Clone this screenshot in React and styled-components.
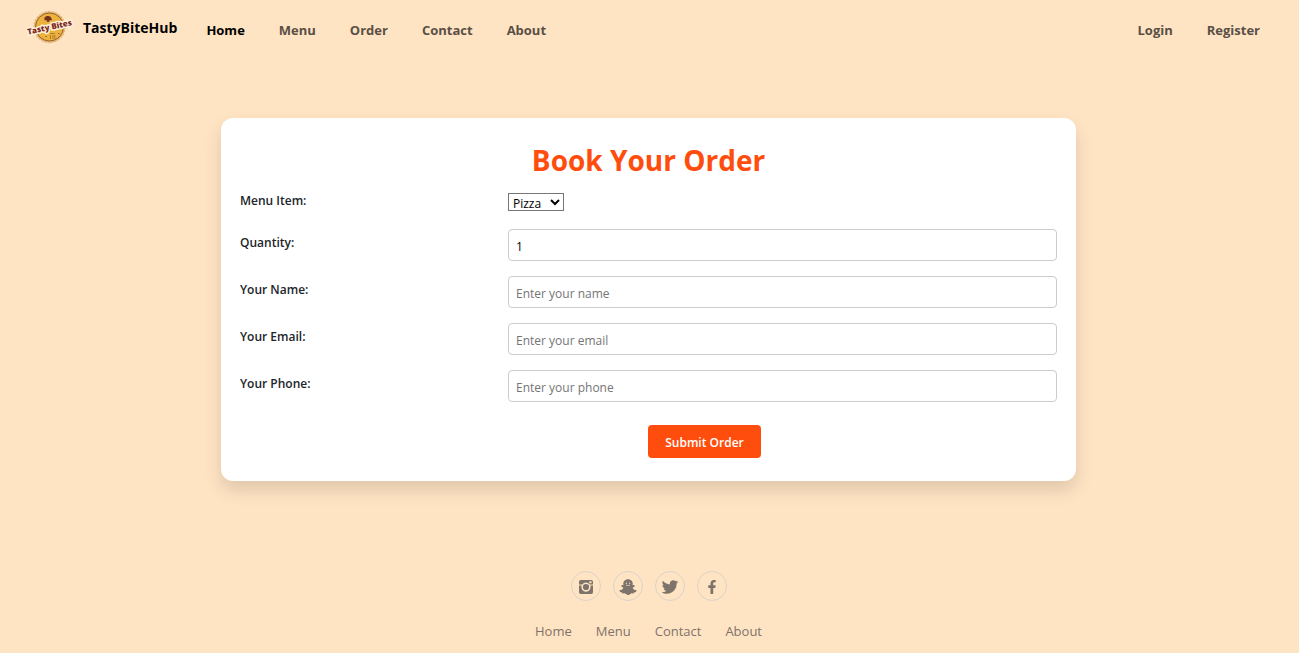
import React from "react";
import styled, { createGlobalStyle } from "styled-components";
import { IoLogoSnapchat, IoLogoTwitter } from "react-icons/io";
import { FaFacebookF } from "react-icons/fa";

const GlobalStyle = createGlobalStyle`
  *, *::before, *::after { box-sizing: border-box; }
  body {
    margin: 0;
    background: #ffe4c4;
    color: #212529;
    font-family: "Segoe UI", "Open Sans", "Noto Sans", sans-serif;
    font-size: 12px;
    line-height: 20px;
  }
`;

const Page = styled.div`
  padding-right: 2px;
`;

const Navbar = styled.nav`
  display: flex;
  align-items: center;
  height: 58px;
  padding: 0 20px 0 26px;
`;

const Brand = styled.a`
  display: flex;
  align-items: center;
  gap: 10px;
  margin-right: 12px;
  padding-bottom: 2px;
  color: #000;
  font-size: 14px;
  font-weight: 700;
  text-decoration: none;
`;

const Logo = styled.svg`
  display: block;
  width: 47px;
  height: 36px;
  margin-top: -2px;
`;

const NavList = styled.ul`
  display: flex;
  list-style: none;
  margin: 0;
  padding: 2px 0 0;
  margin-left: ${(p) => (p.$end ? "auto" : "0")};
`;

const NavLink = styled.a`
  display: block;
  padding: 0 17px;
  color: ${(p) => (p.$active ? "#000" : "#594f44")};
  font-size: 13px;
  font-weight: 700;
  text-decoration: none;
`;

const Main = styled.main`
  padding: 60px 16px 90px;
`;

const Card = styled.section`
  max-width: 855px;
  margin: 0 auto;
  padding: 24px 19px 23px;
  background: #fff;
  border-radius: 12px;
  box-shadow: 0 9px 18px rgba(0, 0, 0, 0.13);
`;

const Title = styled.h1`
  margin: 0 0 14px;
  color: #ff4d0d;
  font-size: 28px;
  font-weight: 700;
  line-height: 36px;
  text-align: center;
`;

const Row = styled.div`
  display: grid;
  grid-template-columns: 268px 1fr;
  align-items: start;
  margin-bottom: 15px;
`;

const Label = styled.label`
  font-weight: 600;
  line-height: 18px;
  padding-top: ${(p) => (p.$compact ? "0" : "5px")};
`;

const Select = styled.select`
  justify-self: start;
  width: 56px;
  height: 18px;
  margin: 1px 0 3px;
  padding: 0;
  border: 1px solid #767676;
  border-radius: 0;
  background: #fff;
  color: #000;
  font: inherit;
  line-height: 16px;
`;

const Input = styled.input`
  width: 100%;
  height: 32px;
  padding: 2px 7px 0;
  border: 1px solid #ccc;
  border-radius: 4px;
  background: #fff;
  color: #000;
  font: inherit;
  &::placeholder { color: #757575; }
`;

const Actions = styled.div`
  display: flex;
  justify-content: center;
  padding: 8px 0 0 112px;
`;

const Submit = styled.button`
  height: 33px;
  padding: 3px 17px 0;
  border: 0;
  border-radius: 4px;
  background: #ff4d0d;
  color: #fff;
  font: inherit;
  font-weight: 600;
`;

const Footer = styled.footer`
  display: flex;
  flex-direction: column;
  align-items: center;
  gap: 20px;
  padding-bottom: 12px;
`;

const Social = styled.div`
  display: flex;
  gap: 12px;
`;

const SocialLink = styled.a`
  display: flex;
  align-items: center;
  justify-content: center;
  width: 30px;
  height: 30px;
  padding-top: 2px;
  border: 1px solid #dad2c9;
  border-radius: 50%;
  color: #7e736a;
`;

const FooterLinks = styled.ul`
  display: flex;
  gap: 24px;
  list-style: none;
  margin: 0;
  padding: 0;
`;

const FooterLink = styled.a`
  color: #7e736a;
  font-size: 13px;
  text-decoration: none;
`;

function BrandLogo() {
  return (
    <Logo viewBox="0 0 47 36" aria-hidden="true">
      <circle cx="23.5" cy="18" r="15.5" fill="#e2b365" stroke="#e3bd80" strokeWidth="1.5" strokeDasharray="2 1.4" />
      <circle cx="23.5" cy="18" r="14" fill="#edb23c" stroke="#8a5a3a" strokeWidth="0.9" />
      <path d="M18.5 10.5a3.4 2.9 0 0 1 6.8-1.2q1 .8.4 1.9h-2.3v1.6h-2.6v-1.6h-2.3z" fill="#743022" />
      <path d="M24 24.5h5M24.5 26v4M27 26v4M28.8 26v4" stroke="#a87532" strokeWidth="0.9" />
      <path d="M19.4 27.5h1.4M32 24.5h1.4" stroke="#8a5a3a" strokeWidth="1" />
      <g transform="rotate(-12 23.5 18)">
        <text
          x="23.5"
          y="21"
          textAnchor="middle"
          fontFamily="'Open Sans', sans-serif"
          fontSize="8"
          fontWeight="800"
          fill="#7a2a22"
          stroke="#fff1dc"
          strokeWidth="3"
          strokeLinejoin="round"
          paintOrder="stroke"
        >
          Tasty Bites
        </text>
      </g>
    </Logo>
  );
}

function InstagramIcon() {
  return (
    <svg width="14" height="14" viewBox="0 0 14 14" aria-hidden="true">
      <path
        fill="currentColor"
        fillRule="evenodd"
        d="M1.8 0h10.4A1.8 1.8 0 0 1 14 1.8v10.4a1.8 1.8 0 0 1-1.8 1.8H1.8A1.8 1.8 0 0 1 0 12.2V1.8A1.8 1.8 0 0 1 1.8 0zM10.3 1.3v2h2.2v-2zM0 4.4v1h2.7a4.6 4.6 0 1 0 8.6 0H14v-1h-3.3a4.6 4.6 0 0 0-7.4 0zM7 3.9a3.1 3.1 0 1 1 0 6.2 3.1 3.1 0 0 1 0-6.2z"
      />
    </svg>
  );
}

const fields = [
  { id: "quantity", label: "Quantity:", type: "number", defaultValue: "1" },
  { id: "name", label: "Your Name:", type: "text", placeholder: "Enter your name" },
  { id: "email", label: "Your Email:", type: "email", placeholder: "Enter your email" },
  { id: "phone", label: "Your Phone:", type: "tel", placeholder: "Enter your phone" },
];

export default function App() {
  return (
    <Page>
      <GlobalStyle />
      <Navbar>
        <Brand href="#home">
          <BrandLogo />
          TastyBiteHub
        </Brand>
        <NavList>
          {["Home", "Menu", "Order", "Contact", "About"].map((name) => (
            <li key={name}>
              <NavLink href={`#${name.toLowerCase()}`} $active={name === "Home"}>{name}</NavLink>
            </li>
          ))}
        </NavList>
        <NavList $end>
          <li><NavLink href="#login">Login</NavLink></li>
          <li><NavLink href="#register">Register</NavLink></li>
        </NavList>
      </Navbar>
      <Main>
        <Card>
          <Title>Book Your Order</Title>
          <form onSubmit={(e) => e.preventDefault()}>
            <Row>
              <Label htmlFor="item" $compact>Menu Item:</Label>
              <Select id="item" defaultValue="Pizza">
                <option>Pizza</option>
              </Select>
            </Row>
            {fields.map(({ label, ...field }) => (
              <Row key={field.id}>
                <Label htmlFor={field.id}>{label}</Label>
                <Input {...field} />
              </Row>
            ))}
            <Actions>
              <Submit type="submit">Submit Order</Submit>
            </Actions>
          </form>
        </Card>
      </Main>
      <Footer>
        <Social>
          <SocialLink href="#instagram" aria-label="Instagram"><InstagramIcon /></SocialLink>
          <SocialLink href="#snapchat" aria-label="Snapchat"><IoLogoSnapchat size={18} /></SocialLink>
          <SocialLink href="#twitter" aria-label="Twitter"><IoLogoTwitter size={18} /></SocialLink>
          <SocialLink href="#facebook" aria-label="Facebook"><FaFacebookF size={14} /></SocialLink>
        </Social>
        <FooterLinks>
          {["Home", "Menu", "Contact", "About"].map((name) => (
            <li key={name}>
              <FooterLink href={`#${name.toLowerCase()}`}>{name}</FooterLink>
            </li>
          ))}
        </FooterLinks>
      </Footer>
    </Page>
  );
}
